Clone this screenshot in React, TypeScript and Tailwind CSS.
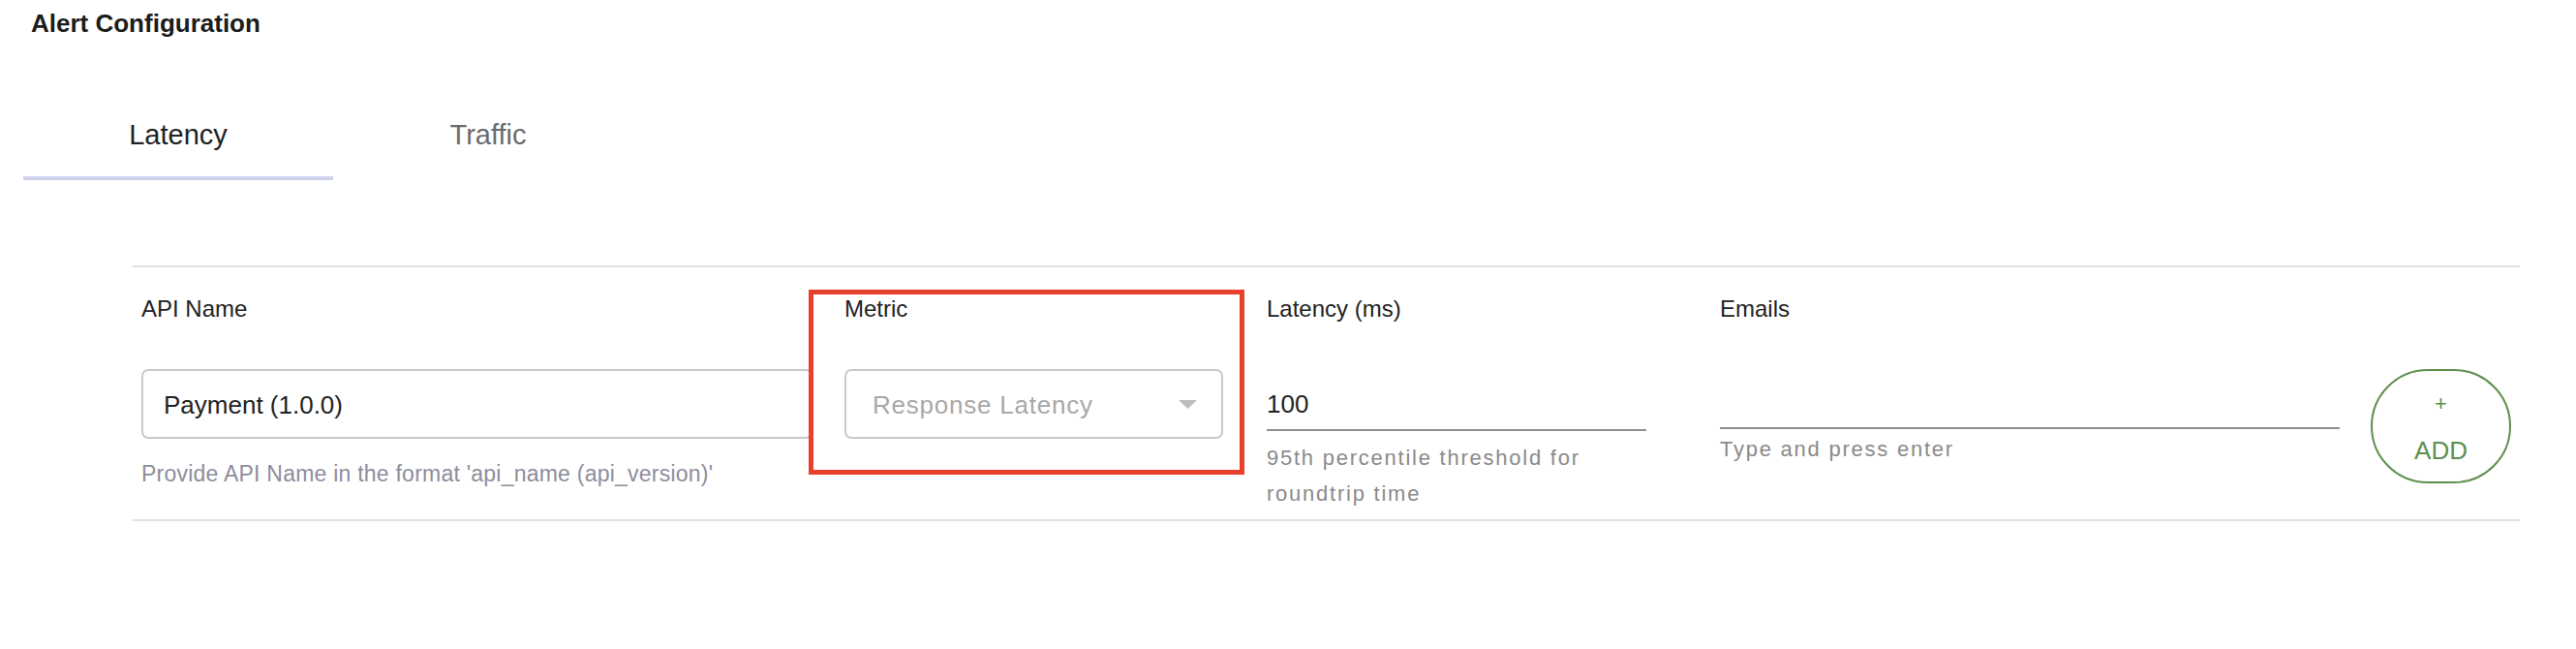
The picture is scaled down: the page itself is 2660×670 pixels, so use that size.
import React from "react";

const App = () => {
  return (
    <div
      className="w-full h-[670px] bg-white text-[#222222]"
      style={{ fontFamily: '"Liberation Sans", Arial, sans-serif' }}
    >
      {/* Title */}
      <h1 className="pt-[8px] pl-[32px] text-[26px] leading-[32px] font-bold text-[#1c1c1c]">
        Alert Configuration
      </h1>

      {/* Tabs */}
      <div className="mt-[81px] ml-[24px] flex">
        <button className="w-[320px] pb-[25px] border-b-4 border-[#cfd1ee] text-[29px] leading-[36px] text-[#222222]">
          Latency
        </button>
        <button className="w-[320px] pb-[25px] border-b-4 border-transparent text-[29px] leading-[36px] text-[#6b6b6b]">
          Traffic
        </button>
      </div>

      {/* Alert row */}
      <div className="mt-[88px] ml-[137px] w-[2465px] h-[264px] border-y-2 border-[#e2e2e2] px-[9px] flex">
        {/* API Name */}
        <div className="w-[693px] pt-[28px] flex flex-col">
          <label className="text-[24px] leading-[30px]">API Name</label>
          <div className="mt-[47px] h-[72px] border-2 border-[#c9c9c9] rounded-[7px] pl-[21px] flex items-center">
            <span className="text-[26px] leading-[30px] pt-[2px]">Payment (1.0.0)</span>
          </div>
          <p className="mt-[21px] text-[23px] leading-[30px] tracking-[0.01em] text-[#8d8d9c]">
            Provide API Name in the format 'api_name (api_version)'
          </p>
        </div>

        {/* Metric */}
        <div className="relative ml-[33px] w-[391px] pt-[28px] flex flex-col">
          <label className="text-[24px] leading-[30px]">Metric</label>
          <div className="mt-[47px] h-[72px] border-2 border-[#c9c9c9] rounded-[7px] pl-[27px] pr-[25px] flex items-center justify-between">
            <span className="text-[26px] leading-[30px] pt-[2px] tracking-[0.03em] text-[#a8a8a8]">
              Response Latency
            </span>
            <svg width="19" height="9" viewBox="0 0 19 9">
              <polygon points="0,0 19,0 9.5,9" fill="#bdbdbd" />
            </svg>
          </div>
          {/* annotation box */}
          <div className="absolute left-[-37px] top-[23px] w-[450px] h-[191px] border-[5px] border-[#e8412b]" />
        </div>

        {/* Latency */}
        <div className="ml-[45px] w-[392px] pt-[28px] flex flex-col">
          <label className="text-[24px] leading-[30px]">Latency (ms)</label>
          <div className="mt-[68px] h-[43px] border-b-2 border-[#8f8f8f]">
            <span className="text-[26px] leading-[30px]">100</span>
          </div>
          <p className="mt-[9px] text-[22px] leading-[37px] tracking-[0.08em] text-[#8a8a8a]">
            95th percentile threshold for
            <br />
            roundtrip time
          </p>
        </div>

        {/* Emails */}
        <div className="ml-[76px] w-[640px] pt-[28px] flex flex-col">
          <label className="text-[24px] leading-[30px]">Emails</label>
          <div className="mt-[68px] h-[41px] border-b-2 border-[#8f8f8f]" />
          <p className="mt-[6px] text-[22px] leading-[30px] tracking-[0.08em] text-[#8a8a8a]">
            Type and press enter
          </p>
        </div>

        {/* Add button */}
        <div className="ml-[32px] pt-[105px]">
          <button className="w-[145px] h-[118px] rounded-full border-2 border-[#5e8f4d] text-[#5e8f4d] flex flex-col items-center pt-[24px]">
            <span className="text-[22px] leading-[20px]">+</span>
            <span className="mt-[23px] text-[26px] leading-[30px]">ADD</span>
          </button>
        </div>
      </div>
    </div>
  );
};

export default App;
